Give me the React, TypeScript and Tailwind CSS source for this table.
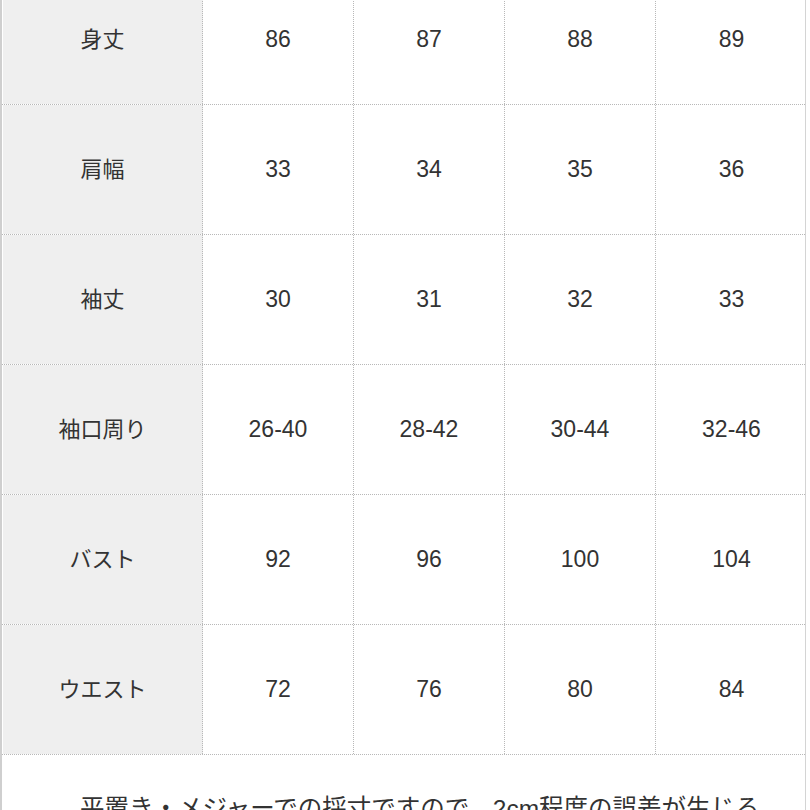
const ROWS: { label: string; values: string[] }[] = [
  { label: "身丈", values: ["86", "87", "88", "89"] },
  { label: "肩幅", values: ["33", "34", "35", "36"] },
  { label: "袖丈", values: ["30", "31", "32", "33"] },
  { label: "袖口周り", values: ["26-40", "28-42", "30-44", "32-46"] },
  { label: "バスト", values: ["92", "96", "100", "104"] },
  { label: "ウエスト", values: ["72", "76", "80", "84"] },
];

export default function App() {
  return (
    <div
      className="h-[810px] w-[810px] overflow-hidden bg-white text-[#333]"
      style={{ fontFamily: '"Liberation Sans", "Noto Sans CJK JP", sans-serif' }}
    >
      <div className="flex h-full">
        <div className="w-[2px] shrink-0 bg-[#cfcfcf]" />
        <div className="w-[804px] shrink-0 border-r border-[#d4d4d4]">
          <div className="-mt-[25px]">
            {ROWS.map((row) => (
              <div
                key={row.label}
                className="flex h-[130px] border-b border-dotted border-[#b8b8b8]"
              >
                <div className="ml-px flex w-[200px] shrink-0 items-center justify-center border-r border-dotted border-[#b8b8b8] bg-[#efefef] text-[22px]">
                  {row.label}
                </div>
                {row.values.map((v, i) => (
                  <div
                    key={i}
                    className={`flex w-[151px] shrink-0 items-center justify-center text-[23px] ${
                      i < 3 ? "border-r border-dotted border-[#b8b8b8]" : ""
                    }`}
                  >
                    {v}
                  </div>
                ))}
              </div>
            ))}
          </div>
          <div className="pt-[37px] pl-[78px] text-[24.5px] leading-[34px] whitespace-nowrap">
            平置き・メジャーでの採寸ですので、2cm程度の誤差が生じる
          </div>
        </div>
      </div>
    </div>
  );
}
